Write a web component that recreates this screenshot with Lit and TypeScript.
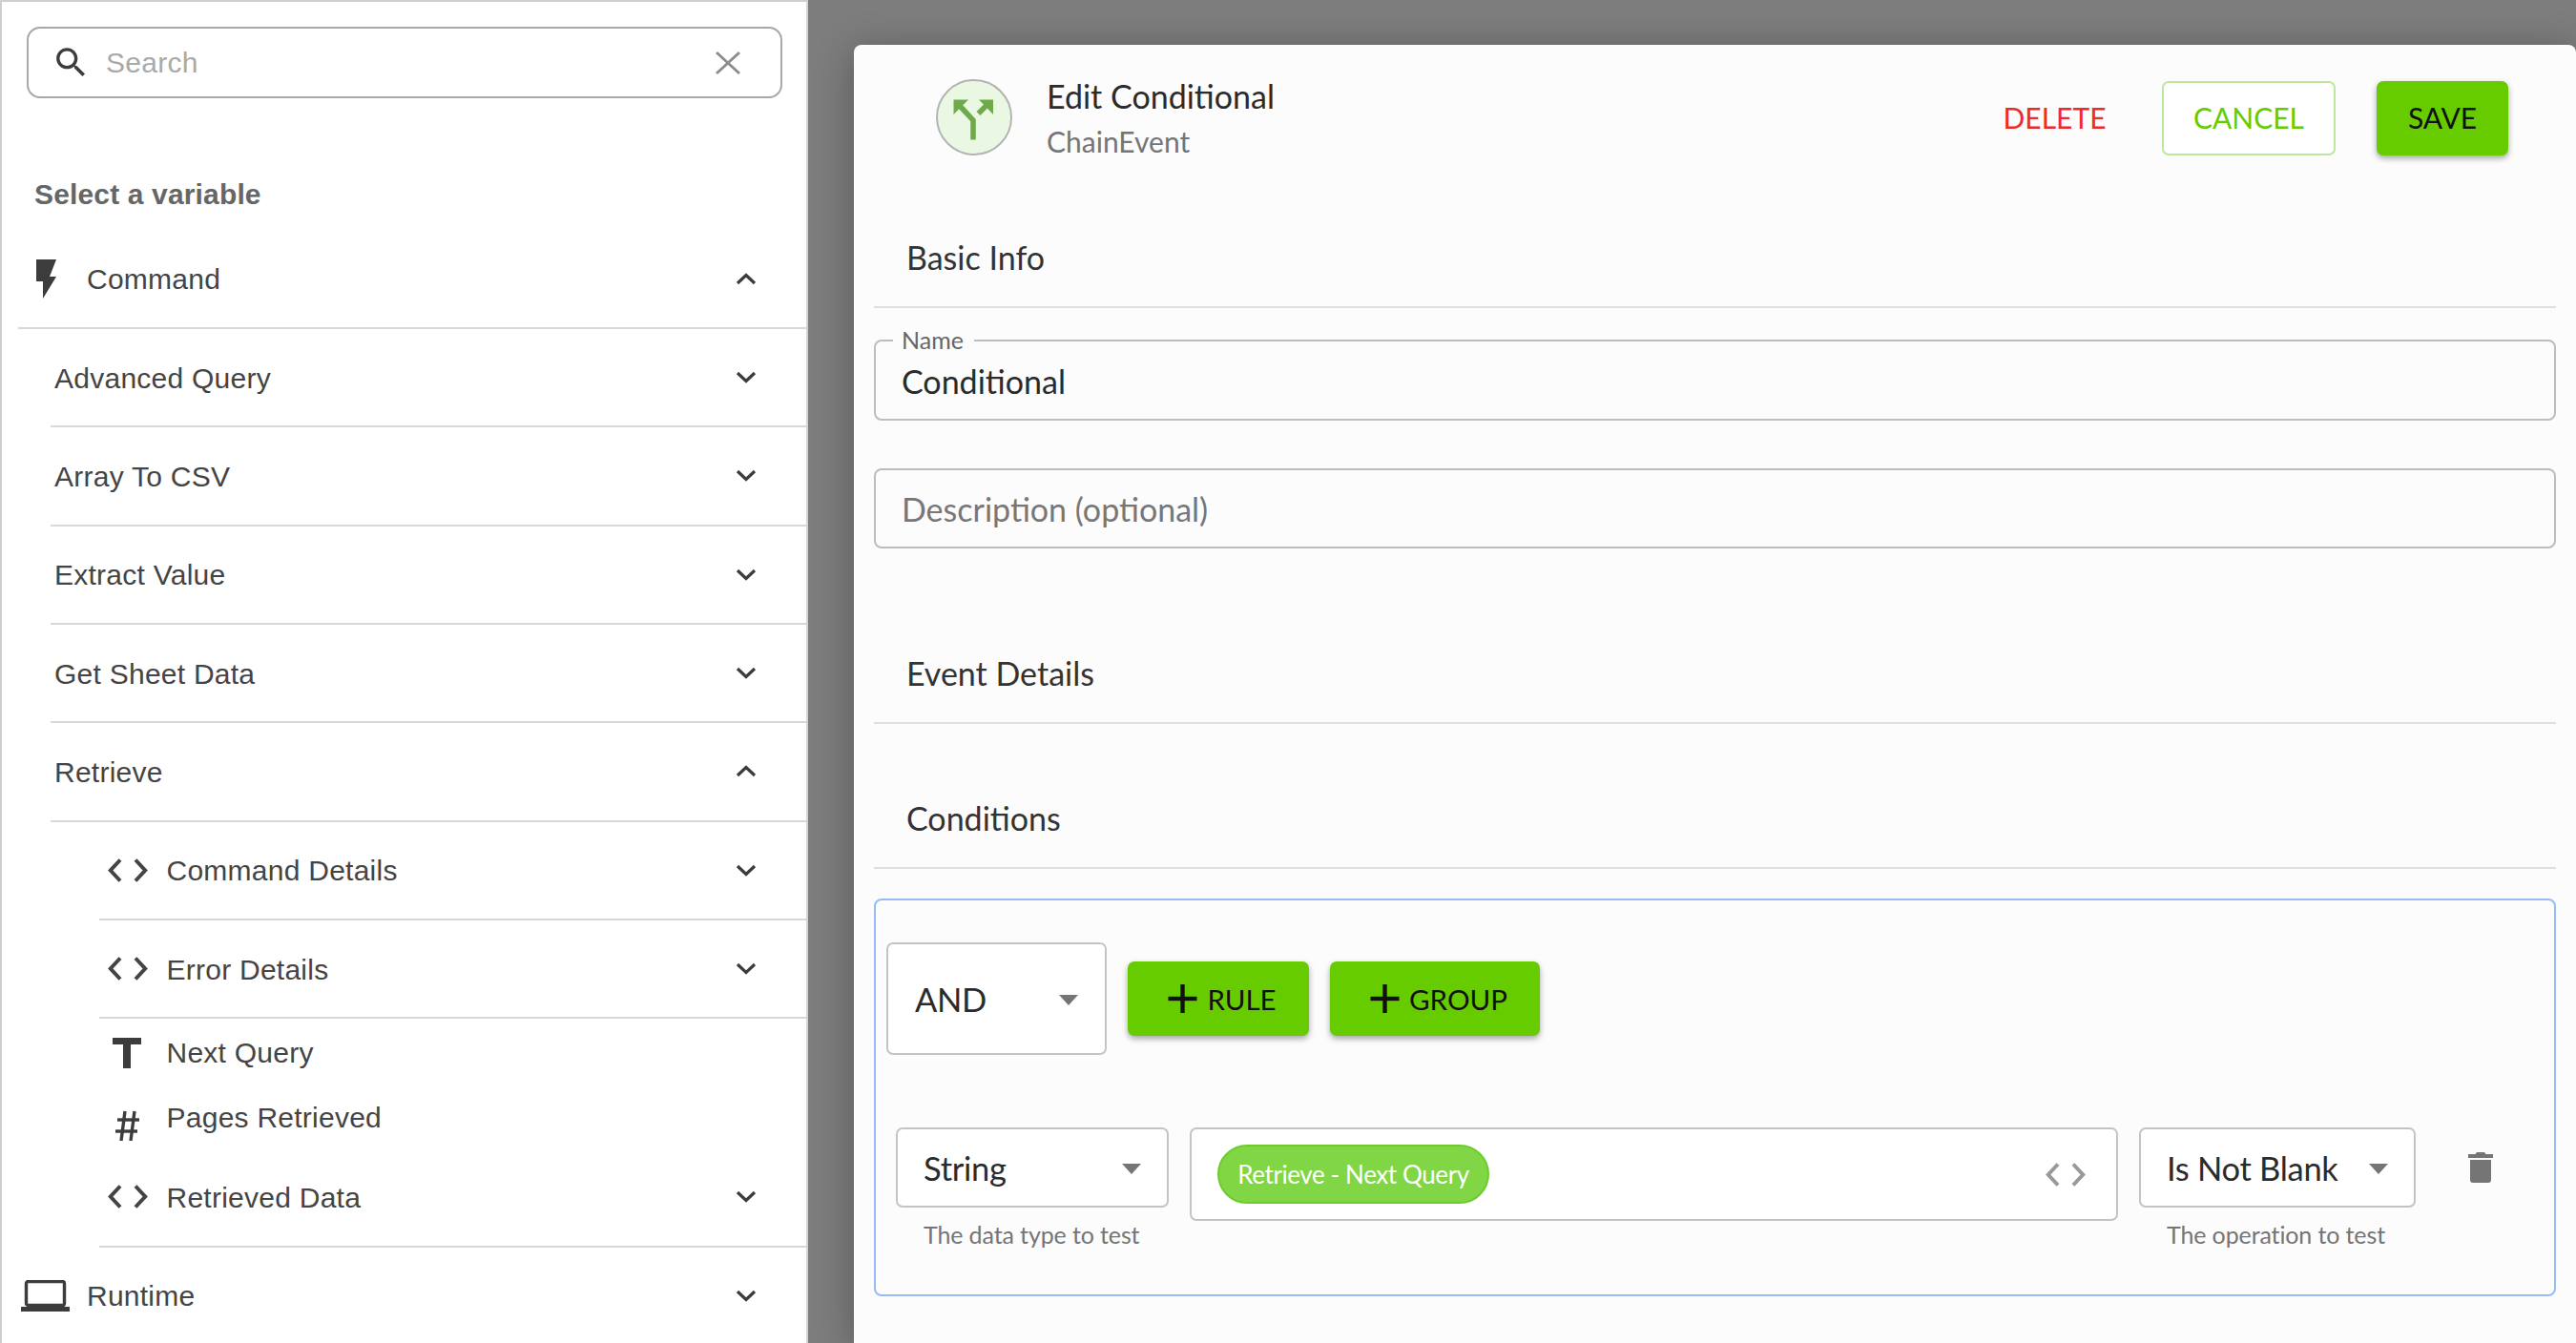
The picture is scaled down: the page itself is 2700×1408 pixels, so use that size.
import { LitElement, html, css, svg } from "lit";
import { customElement } from "lit/decorators.js";

type Row = { label: string; level: 0 | 1 | 2; icon?: string; chevron?: "up" | "down"; short?: string };

const rows: Row[] = [
  { label: "Command", level: 0, icon: "bolt", chevron: "up" },
  { label: "Advanced Query", level: 1, chevron: "down" },
  { label: "Array To CSV", level: 1, chevron: "down" },
  { label: "Extract Value", level: 1, chevron: "down" },
  { label: "Get Sheet Data", level: 1, chevron: "down" },
  { label: "Retrieve", level: 1, chevron: "up" },
  { label: "Command Details", level: 2, icon: "code", chevron: "down" },
  { label: "Error Details", level: 2, icon: "code", chevron: "down" },
  { label: "Next Query", level: 2, icon: "text", short: "next" },
  { label: "Pages Retrieved", level: 2, icon: "hash", short: "pages" },
  { label: "Retrieved Data", level: 2, icon: "code", chevron: "down" },
  { label: "Runtime", level: 0, icon: "laptop", chevron: "down" },
];

const codeIcon = (cls = "code") => html`<svg class=${cls} viewBox="0 0 42 25" fill="none" stroke="currentColor" stroke-width="4">
  <polyline points="13,1.5 2.8,12.5 13,23.5"></polyline>
  <polyline points="29,1.5 39.2,12.5 29,23.5"></polyline>
</svg>`;

const icons: Record<string, () => unknown> = {
  bolt: () => html`<svg class="bolt" viewBox="0 0 21 41"><polygon points="0,0 21,0 14,18 21,18 7,41 7,23 0,23" fill="#3c3c3c"></polygon></svg>`,
  code: () => codeIcon(),
  text: () => html`<svg class="t-icon" viewBox="0 0 30 32"><path d="M0 0h30v7H19v25h-8V7H0z" fill="#3c3c3c"></path></svg>`,
  hash: () => html`<svg class="hash" viewBox="0 0 26 32" stroke="#3c3c3c" stroke-width="3.4" fill="none">
    <line x1="10" y1="1" x2="6" y2="32"></line>
    <line x1="20" y1="1" x2="16" y2="32"></line>
    <line x1="2" y1="10" x2="25" y2="10"></line>
    <line x1="0" y1="22" x2="23" y2="22"></line>
  </svg>`,
  laptop: () => html`<svg class="laptop" viewBox="0 0 51 33">
    <rect x="5.5" y="1.5" width="40" height="25" rx="2" fill="none" stroke="#3c3c3c" stroke-width="3.4"></rect>
    <rect x="0" y="28" width="51" height="5" fill="#3c3c3c"></rect>
  </svg>`,
};

const chevron = (dir: "up" | "down") => html`<svg class="chev" viewBox="0 0 22 13" fill="none" stroke="#3c3c3c" stroke-width="3.2">
  ${dir === "down"
    ? svg`<polyline points="2,2 11,10.5 20,2"></polyline>`
    : svg`<polyline points="2,11 11,2.5 20,11"></polyline>`}
</svg>`;

const caret = html`<svg class="caret" viewBox="0 0 20 11"><polygon points="0,0 20,0 10,11" fill="#757575"></polygon></svg>`;

@customElement("var-sidebar")
class VarSidebar extends LitElement {
  static styles = css`
    :host {
      display: block;
      box-sizing: border-box;
      width: 847px;
      height: 1408px;
      flex: none;
      background: #fff;
      border-left: 2px solid #cfcfcf;
      border-top: 2px solid #cfcfcf;
      border-right: 2px solid #d4d4d4;
      overflow: hidden;
      font-family: "Liberation Sans", Arial, sans-serif;
      color: #444;
    }
    .search {
      box-sizing: border-box;
      display: flex;
      align-items: center;
      width: 792px;
      height: 75px;
      margin: 26px 0 0 26px;
      padding: 0 42px 0 24px;
      border: 2px solid #a8a8a8;
      border-radius: 14px;
      font-size: 30px;
      letter-spacing: 0.3px;
      color: #a9a9a9;
    }
    .search .lens { width: 41px; height: 41px; margin-right: 16px; flex: none; }
    .search span { flex: 1; }
    .search .x { width: 26px; height: 24px; flex: none; }
    h2 {
      margin: 84px 0 20.5px 34px;
      font-size: 30px;
      line-height: 34px;
      font-weight: 700;
      letter-spacing: 0.15px;
      color: #666;
    }
    .row {
      box-sizing: border-box;
      display: flex;
      align-items: center;
      height: 103.35px;
      padding-right: 52px;
      border-bottom: 2px solid #d8d8d8;
      font-size: 30px;
      letter-spacing: 0.25px;
    }
    .row span { flex: 1; padding-top: 2px; }
    .l0 { margin-left: 17px; }
    .l1 { margin-left: 51px; padding-left: 4px; }
    .l2 { margin-left: 102px; padding-left: 8px; }
    .iconbox { flex: none; display: flex; align-items: center; justify-content: center; }
    .l0 .iconbox { width: 55px; margin-right: 17px; }
    .l2 .iconbox { width: 44px; margin-right: 18.5px; }
    .row.next { height: 71px; border-bottom: 0; }
    .row.pages { height: 65px; border-bottom: 0; }
    .row.pages span { padding-top: 0; }
    .row.next span { padding-top: 0; }
    .row.pages .iconbox { margin-top: 16px; }
    .bolt { width: 21px; height: 41px; margin-left: 4px; }
    .code { width: 42px; height: 25px; margin-left: -1px; }
    .t-icon { width: 30px; height: 32px; margin-left: -2px; }
    .hash { width: 26px; height: 32px; }
    .laptop { width: 51px; height: 33px; margin-left: 2px; }
    .chev { width: 22px; height: 13px; flex: none; }
  `;

  render() {
    return html`
      <div class="search">
        <svg class="lens" viewBox="0 0 24 24"><path fill="#3c3c3c" d="M15.5 14h-.79l-.28-.27C15.41 12.59 16 11.11 16 9.5 16 5.91 13.09 3 9.5 3S3 5.91 3 9.5 5.91 16 9.5 16c1.61 0 3.09-.59 4.23-1.57l.27.28v.79l5 4.99L20.49 19l-4.99-5zm-6 0C7.01 14 5 11.99 5 9.5S7.01 5 9.5 5 14 7.01 14 9.5 11.99 14 9.5 14z"></path></svg>
        <span>Search</span>
        <svg class="x" viewBox="0 0 26 24" stroke="#8c8c8c" stroke-width="2.8"><line x1="1" y1="1" x2="25" y2="23"></line><line x1="25" y1="1" x2="1" y2="23"></line></svg>
      </div>
      <h2>Select a variable</h2>
      ${rows.map(
        (r) => html`<div class="row l${r.level} ${r.short ?? ""}">
          ${r.icon ? html`<div class="iconbox">${icons[r.icon]()}</div>` : ""}
          <span>${r.label}</span>
          ${r.chevron ? chevron(r.chevron) : ""}
        </div>`
      )}
    `;
  }
}

@customElement("edit-panel")
class EditPanel extends LitElement {
  static styles = css`
    :host {
      display: block;
      box-sizing: border-box;
      flex: 1;
      height: 1361px;
      margin: 47px 0 0 48px;
      padding: 0 21px;
      background: #fcfcfc;
      border-radius: 8px 8px 0 0;
      box-shadow: 0 6px 40px rgba(0, 0, 0, 0.3);
      font-family: Lato, "Open Sans", sans-serif;
      color: #2b2b2b;
    }
    header {
      box-sizing: border-box;
      display: flex;
      align-items: flex-start;
      height: 170px;
      padding: 36px 50px 0 65px;
    }
    .badge { width: 80px; height: 80px; flex: none; margin-right: 36px; }
    .titles { flex: 1; }
    .titles h1 { margin: -4px 0 0; font-size: 34px; line-height: 44px; font-weight: 400; }
    .titles p { margin: 7px 0 0; font-size: 30px; line-height: 36px; color: #757575; }
    .btn {
      box-sizing: border-box;
      display: inline-flex;
      align-items: center;
      justify-content: center;
      height: 78px;
      border-radius: 7px;
      font-size: 30px;
      color: #111;
    }
    header .btn { margin-top: 2px; padding-bottom: 3px; }
    .delete { color: #ee2a2a; width: 107px; margin-right: 59px; }
    .cancel { color: #66cc00; width: 182px; border: 2px solid #bde79c; margin-right: 43px; background: #fff; }
    .solid { background: #66cc00; box-shadow: 0 3px 6px rgba(0, 0, 0, 0.35); }
    .save { width: 138px; }
    .heading {
      box-sizing: border-box;
      display: flex;
      align-items: center;
      height: 106px;
      padding-left: 34px;
      border-bottom: 2px solid #dedede;
      font-size: 34px;
      color: #333;
    }
    .field {
      box-sizing: border-box;
      position: relative;
      display: flex;
      align-items: center;
      height: 85px;
      padding: 0 27px;
      margin-top: 33px;
      border: 2px solid #bdbdbd;
      border-radius: 8px;
      font-size: 34px;
    }
    .field.filled { padding-top: 1px; }
    .field.desc { margin-top: 50px; height: 84px; color: #777; }
    .notch {
      position: absolute;
      left: 18px;
      top: -14px;
      padding: 0 11px 0 9px;
      background: #fcfcfc;
      font-size: 25px;
      line-height: 24px;
      color: #666;
    }
    .events { margin-top: 78px; }
    .conditions { margin-top: 46px; }
    .group {
      box-sizing: border-box;
      height: 417px;
      margin-top: 31px;
      padding: 44px 11px 0;
      border: 2px solid #97bbf9;
      border-radius: 8px;
    }
    .toolbar { display: flex; align-items: center; gap: 22px; }
    .select {
      box-sizing: border-box;
      display: flex;
      align-items: center;
      border: 2px solid #c4c4c4;
      border-radius: 7px;
      font-size: 34.5px;
      letter-spacing: -0.3px;
      background: #fff;
    }
    .select span { flex: 1; }
    .caret { width: 20px; height: 11px; flex: none; margin-top: 2px; }
    .and { width: 231px; height: 118px; padding: 0 28px; }
    .rule-btn { width: 190px; padding-left: 8px; }
    .group-btn { width: 220px; padding-left: 8px; }
    .toolbar .btn { font-size: 29.5px; }
    .btn svg.plus { width: 31px; height: 30px; margin-right: 10px; flex: none; }
    .rule {
      display: flex;
      align-items: flex-start;
      margin: 76px 0 0 10px;
    }
    .col { flex: none; }
    .col .select { height: 84px; padding: 0 27px 0 27px; }
    .type { width: 286px; }
    .op { width: 290px; }
    .hint { margin: 12px 0 0 29px; font-size: 25px; line-height: 32px; letter-spacing: -0.12px; color: #757575; }
    .value {
      box-sizing: border-box;
      display: flex;
      align-items: center;
      justify-content: space-between;
      width: 973px;
      height: 98px;
      margin: 0 22px 0 22px;
      padding: 0 32px 0 27px;
      border: 2px solid #c4c4c4;
      border-radius: 7px;
      background: #fff;
      flex: none;
    }
    .chip {
      box-sizing: border-box;
      display: flex;
      align-items: center;
      justify-content: center;
      width: 285px;
      height: 62px;
      border: 2px solid #6dcb2b;
      border-radius: 31px;
      background: #80d644;
      color: #fff;
      font-size: 26px;
      letter-spacing: -0.4px;
    }
    .value .code { color: #999; width: 42px; height: 25px; }
    .trash { width: 26px; height: 32px; margin: 26px 0 0 55px; flex: none; }
  `;

  render() {
    return html`
      <header>
        <svg class="badge" viewBox="0 0 80 80">
          <circle cx="40" cy="40" r="39" fill="#eaf7e3" stroke="#b3b3b3" stroke-width="2"></circle>
          <g fill="#6ea94a">
            <polygon points="18.5,21.5 34,21.5 18.5,37"></polygon>
            <polygon points="45,21.5 60,21.5 60,37"></polygon>
          </g>
          <g fill="none" stroke="#6ea94a" stroke-width="5.5">
            <polyline points="25,28 39,43 39,63.5"></polyline>
            <line x1="44.5" y1="36" x2="54" y2="26.5"></line>
          </g>
        </svg>
        <div class="titles">
          <h1>Edit Conditional</h1>
          <p>ChainEvent</p>
        </div>
        <div class="btn delete">DELETE</div>
        <div class="btn cancel">CANCEL</div>
        <div class="btn solid save">SAVE</div>
      </header>

      <div class="heading">Basic Info</div>
      <div class="field filled">
        <div class="notch">Name</div>
        Conditional
      </div>
      <div class="field desc">Description (optional)</div>

      <div class="heading events">Event Details</div>
      <div class="heading conditions">Conditions</div>

      <div class="group">
        <div class="toolbar">
          <div class="select and"><span>AND</span>${caret}</div>
          <div class="btn solid rule-btn">${this.plus()}RULE</div>
          <div class="btn solid group-btn">${this.plus()}GROUP</div>
        </div>
        <div class="rule">
          <div class="col type">
            <div class="select"><span>String</span>${caret}</div>
            <div class="hint">The data type to test</div>
          </div>
          <div class="value">
            <div class="chip">Retrieve - Next Query</div>
            ${codeIcon()}
          </div>
          <div class="col op">
            <div class="select"><span>Is Not Blank</span>${caret}</div>
            <div class="hint">The operation to test</div>
          </div>
          <svg class="trash" viewBox="0 0 26 32"><path fill="#757575" d="M9 0h8l1.500 2H26v4H0V2h7.500zM2 8h22v21a3 3 0 0 1-3 3H5a3 3 0 0 1-3-3z"></path></svg>
        </div>
      </div>
    `;
  }

  plus() {
    return html`<svg class="plus" viewBox="0 0 30 30" stroke="#111" stroke-width="4.4"><line x1="15" y1="0" x2="15" y2="30"></line><line x1="0" y1="15" x2="30" y2="15"></line></svg>`;
  }
}

@customElement("app-root")
export class AppRoot extends LitElement {
  static styles = css`
    :host {
      display: flex;
      width: 2700px;
      height: 1408px;
      overflow: hidden;
      background: #7d7d7d;
    }
  `;

  render() {
    return html`<var-sidebar></var-sidebar><edit-panel></edit-panel>`;
  }
}
